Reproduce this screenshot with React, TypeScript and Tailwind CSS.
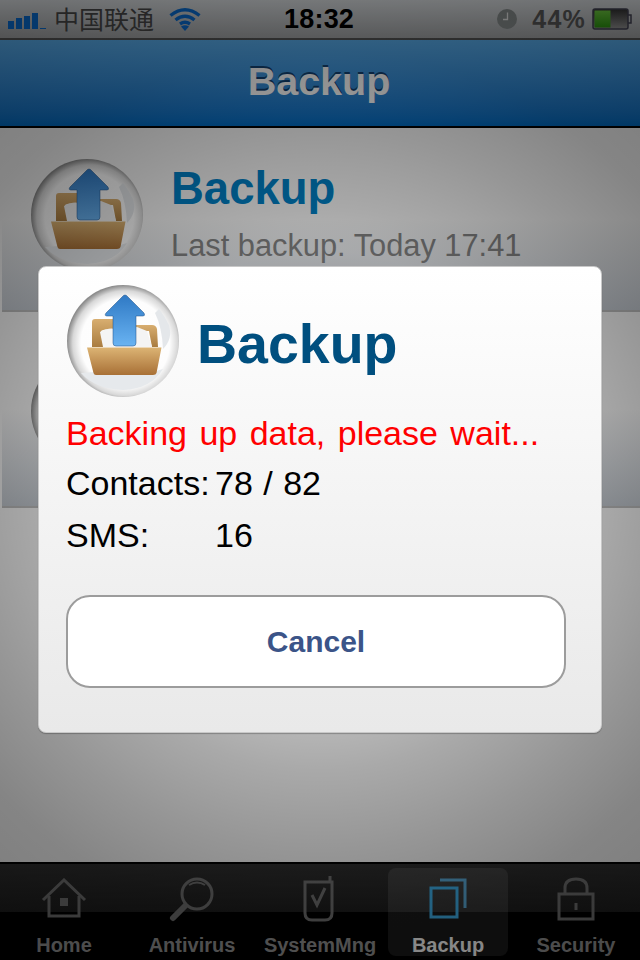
import React from "react";

function BackupIcon() {
  return (
    <svg width="112" height="112" viewBox="0 0 112 112" className="shrink-0">
      <defs>
        <radialGradient id="sph" cx="0.52" cy="0.52" r="0.52">
          <stop offset="0" stopColor="#ffffff" />
          <stop offset="0.76" stopColor="#fdfdfd" />
          <stop offset="0.9" stopColor="#d8d8d8" />
          <stop offset="1" stopColor="#8c8c8c" />
        </radialGradient>
        <linearGradient id="fold" x1="0" y1="0" x2="0" y2="1">
          <stop offset="0" stopColor="#dcb474" />
          <stop offset="1" stopColor="#a87036" />
        </linearGradient>
        <linearGradient id="back" x1="0" y1="0" x2="0" y2="1">
          <stop offset="0" stopColor="#d8ae70" />
          <stop offset="1" stopColor="#a97c40" />
        </linearGradient>
        <linearGradient id="arrow" x1="0" y1="0" x2="0" y2="1">
          <stop offset="0" stopColor="#2f79c4" />
          <stop offset="1" stopColor="#69b3f2" />
        </linearGradient>
      </defs>
      <circle cx="56" cy="56" r="56" fill="url(#sph)" />
      <path d="M14 88 Q36 86 56 88 Q78 90 96 84 Q84 104 56 105 Q28 104 14 88Z" fill="#e6e9ec" />
      <path d="M88 28 Q95 42 96 64 Q106 54 102 40 Q97 30 92 24Z" fill="#e4e7ea" />
      <path d="M25 62 V37 Q25 34 28 34 H46 V44 Q36 44 34 46 L37 62Z" fill="url(#back)" />
      <path d="M66 40 H85 Q89 40 90 44 L91 62 H85 L82 46 L66 46Z" fill="url(#back)" />
      <path d="M33 47 Q42 42 48 44 L70 42 L80 46 L85 62 H36Z" fill="#f4f4f4" />
      <path d="M58 10 Q59.500 10 61 12 L77 28 Q78.500 31 76 31 H69 V58 Q69 61 66 61 H49 Q46 61 46 58 V31 H40 Q37 31 39 28 L55 12 Q56.500 10 58 10Z" fill="url(#arrow)" stroke="#1d4f85" strokeWidth="0.5" />
      <path d="M20 62.500 H94.500 L89.500 88 Q89 90 86 90 H29 Q27 90 26.500 88Z" fill="url(#fold)" />
    </svg>
  );
}

function HomeIcon() {
  return (
    <svg width="46" height="42" viewBox="0 0 46 42" fill="none" stroke="#707070" strokeWidth="3">
      <path d="M2 22 L23 2 L44 22" />
      <path d="M8 18 V38 H38 V18" />
      <rect x="19" y="20" width="8" height="8" fill="#707070" stroke="none" />
    </svg>
  );
}
function SearchIcon() {
  return (
    <svg width="46" height="46" viewBox="0 0 46 46" fill="none" stroke="#707070">
      <circle cx="28" cy="18" r="15" strokeWidth="3" />
      <path d="M20 9 Q28 4 36 9" strokeWidth="2" />
      <path d="M16 30 L4 42" strokeWidth="6" strokeLinecap="round" />
    </svg>
  );
}
function PhoneIcon() {
  return (
    <svg width="34" height="48" viewBox="0 0 34 48" fill="none" stroke="#707070" strokeWidth="3">
      <path d="M27 1 V7 M2 7 H29 V38 Q29 45 22 45 H9 Q2 45 2 38Z" />
      <path d="M9 20 L14 30 L22 13" strokeWidth="3" />
    </svg>
  );
}
function CopyIcon() {
  return (
    <svg width="38" height="42" viewBox="0 0 38 42" fill="none">
      <path d="M11 2 H36 V30" stroke="#5aa9d6" strokeWidth="3" />
      <rect x="2" y="10" width="26" height="29" stroke="#3fb0ea" strokeWidth="3" />
    </svg>
  );
}
function LockIcon() {
  return (
    <svg width="38" height="44" viewBox="0 0 38 44" fill="none" stroke="#707070" strokeWidth="3">
      <path d="M8 17 V11 Q8 2 19 2 Q30 2 30 11 V17" />
      <rect x="2" y="17" width="34" height="25" />
      <rect x="17.500" y="26" width="3" height="7" fill="#707070" stroke="none" />
    </svg>
  );
}

function Tab({ label, icon, active }: { label: string; icon: React.ReactNode; active?: boolean }) {
  return (
    <div className={`flex-1 flex flex-col items-center justify-between rounded-lg mx-1 my-1 pt-1 h-[88px] ${active ? "bg-white/10" : ""}`}>
      <div className="h-[54px] flex items-center justify-center">{icon}</div>
      <span className={`text-[20px] leading-[24px] font-bold whitespace-nowrap mb-[-1px] ${active ? "text-white" : "text-[#949494]"}`}>{label}</span>
    </div>
  );
}

export default function App() {
  return (
    <div className="relative w-[640px] h-[960px] overflow-hidden flex flex-col bg-black font-['Liberation_Sans',sans-serif]">
      {/* status bar */}
      <div className="h-10 shrink-0 flex items-center pl-2 pr-2 border-b-2 border-b-[#555] bg-gradient-to-b from-[#e0e4e7] to-[#a4a6a8]">
        <div className="flex items-end gap-[2px] h-[16px] w-[40px] mt-[4px]">
          <div className="w-[6px] h-[8px] bg-[#0a6fd6]" />
          <div className="w-[6px] h-[11px] bg-[#0a6fd6]" />
          <div className="w-[6px] h-[13px] bg-[#0a6fd6]" />
          <div className="w-[6px] h-[16px] bg-[#0a6fd6]" />
          <div className="w-[6px] h-[1px] bg-[#0a6fd6]" />
        </div>
        <span className="ml-[6px] text-[25px] leading-none mt-[-2px] text-[#4a4a4a] font-['Noto_Sans_CJK_SC',sans-serif]">中国联通</span>
        <svg width="32" height="24" viewBox="0 0 32 24" className="ml-[15px]" fill="none" stroke="#0a6fd6" strokeWidth="3.4">
          <path d="M1.500 8.500 Q16 -3 30.500 8.500" />
          <path d="M6.500 13 Q16 5.500 25.500 13" />
          <path d="M11 17 Q16 13.500 21 17" />
          <path d="M16 24 L12 19.500 Q16 17 20 19.500Z" fill="#0a6fd6" stroke="none" />
        </svg>
        <span className="ml-[83px] text-[27px] leading-none font-bold text-black tracking-[0.2px]">18:32</span>
        <div className="ml-auto flex items-center">
          <svg width="20" height="20" viewBox="0 0 20 20">
            <circle cx="10" cy="10" r="10" fill="#8a9090" />
            <path d="M10.500 3.500 V10.500 H6" stroke="#e8e8e8" strokeWidth="1.300" fill="none" />
          </svg>
          <span className="ml-[15px] text-[25px] leading-none font-bold tracking-[1.2px] text-[#5a5a5a]">44%</span>
          <svg width="40" height="22" viewBox="0 0 40 22" className="ml-[6px]">
            <defs>
              <linearGradient id="batt" x1="0" y1="0" x2="0" y2="1">
                <stop offset="0" stopColor="#6fd040" />
                <stop offset="1" stopColor="#2d9a10" />
              </linearGradient>
              <linearGradient id="battBg" x1="0" y1="0" x2="0" y2="1">
                <stop offset="0" stopColor="#333" />
                <stop offset="1" stopColor="#999" />
              </linearGradient>
            </defs>
            <rect x="1" y="1" width="35" height="20" rx="2" fill="url(#battBg)" stroke="#445" strokeWidth="1.500" />
            <rect x="2.500" y="2.500" width="16" height="17" fill="url(#batt)" />
            <path d="M36 7 H39 V15 H36" fill="none" stroke="#445" strokeWidth="1.500" />
          </svg>
        </div>
      </div>

      {/* nav bar */}
      <div className="h-[88px] shrink-0 flex items-center justify-center border-b-2 border-b-black bg-gradient-to-b from-[#5ab0f0] to-[#006abf]">
        <h1 className="text-[39.5px] leading-none font-bold text-white [text-shadow:0_-2px_0_rgba(0,30,70,0.7)] mb-[3px] mr-[2px]">Backup</h1>
      </div>

      {/* content */}
      <div className="flex-1 flex flex-col bg-[#f5f5f5]">
        <div className="h-[184px] flex items-start ml-[2px] pl-[29px] pt-[31px] gap-[28px] border-b-2 border-b-[#bbb] bg-gradient-to-b from-transparent via-transparent to-[#c2c8cf]">
          <BackupIcon />
          <div className="flex flex-col pt-[4px]">
            <span className="text-[45.5px] leading-[52px] font-bold text-[#007fc4]">Backup</span>
            <span className="mt-[13px] text-[30.800px] leading-[36px] text-[#808080] whitespace-nowrap">Last backup: Today 17:41</span>
          </div>
        </div>
        <div className="h-[196px] flex items-start ml-[2px] pl-[29px] pt-[43px] border-b-2 border-b-[#bbb] bg-gradient-to-b from-transparent via-transparent to-[#c2c8cf]">
          <BackupIcon />
        </div>
      </div>

      {/* tab bar */}
      <div className="h-[98px] shrink-0 flex border-t-2 border-t-black bg-[linear-gradient(to_bottom,#2e2e2e,#1e1e1e_50%,#000_50%)]">
        <Tab label="Home" icon={<HomeIcon />} />
        <Tab label="Antivirus" icon={<SearchIcon />} />
        <Tab label="SystemMng" icon={<PhoneIcon />} />
        <Tab label="Backup" icon={<CopyIcon />} active />
        <Tab label="Security" icon={<LockIcon />} />
      </div>

      {/* dim layer */}
      <div className="absolute inset-0 bg-[radial-gradient(circle_at_320px_490px,rgba(0,0,0,0.2),rgba(0,0,0,0.26)_240px,rgba(0,0,0,0.31)_280px,rgba(0,0,0,0.39)_360px,rgba(0,0,0,0.46)_440px,rgba(0,0,0,0.5)_560px)]" />

      {/* dialog */}
      <div className="absolute left-[38px] top-[266px] w-[564px] h-[467px] rounded-lg border border-[#c8c8c8] shadow-[0_1px_1px_rgba(0,0,0,0.25)] bg-gradient-to-b from-white to-[#e9e9e9] pl-[28px] pr-[35px] pt-[18px]">
        <div className="flex items-center gap-[18px]">
          <BackupIcon />
          <span className="text-[55.500px] leading-none font-bold text-[#004f7f] mt-[8px]">Backup</span>
        </div>
        <p className="mt-[16px] ml-[-1px] text-[34px] leading-[40px] text-[#ff0000] whitespace-nowrap [word-spacing:3px]">Backing up data, please wait...</p>
        <div className="mt-[10px] ml-[-1px] flex text-[34px] leading-[40px] text-black [word-spacing:1px]">
          <span className="w-[149px]">Contacts:</span>
          <span>78 / 82</span>
        </div>
        <div className="mt-[12px] ml-[-1px] flex text-[34px] leading-[40px] text-black">
          <span className="w-[149px]">SMS:</span>
          <span>16</span>
        </div>
        <button className="mt-[40px] w-[500px] ml-[-1px] h-[93px] rounded-[24px] border-2 border-[#9c9c9c] bg-white flex items-center justify-center text-[30px] font-bold text-[#3b5488]">
          Cancel
        </button>
      </div>
    </div>
  );
}
